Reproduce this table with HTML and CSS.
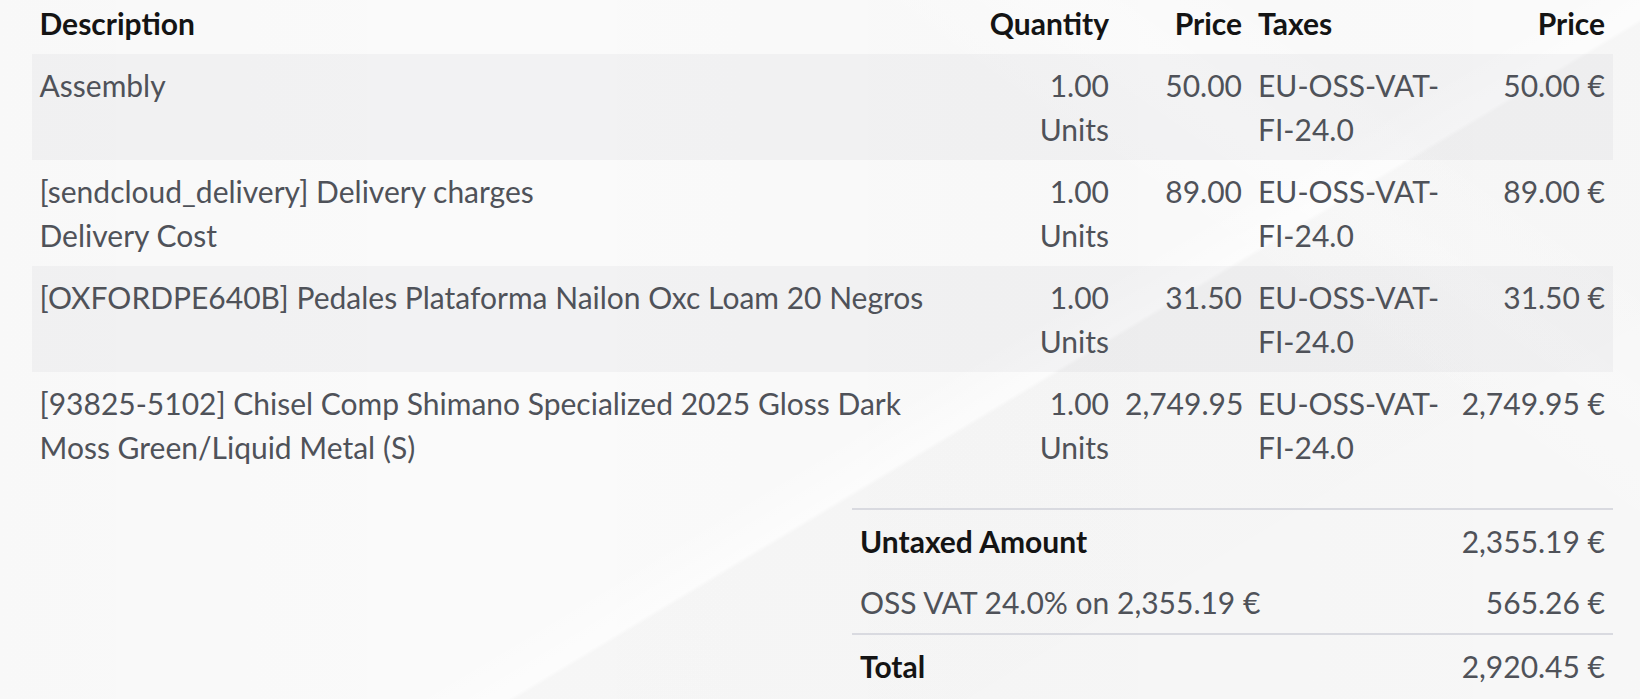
FILE: index.html
```html
<!DOCTYPE html>
<html lang="en">
<head>
<meta charset="utf-8">
<title>Order lines</title>
<link rel="stylesheet" href="styles.css">
</head>
<body>
<div class="page">
  <table class="lines">
    <colgroup>
      <col class="c-desc">
      <col class="c-qty">
      <col class="c-price">
      <col class="c-tax">
      <col class="c-total">
    </colgroup>
    <thead>
      <tr>
        <th class="left">Description</th>
        <th class="right">Quantity</th>
        <th class="right">Price</th>
        <th class="left">Taxes</th>
        <th class="right">Price</th>
      </tr>
    </thead>
    <tbody>
      <tr class="odd">
        <td>Assembly</td>
        <td class="right">1.00 Units</td>
        <td class="right">50.00</td>
        <td>EU-OSS-VAT-FI-24.0</td>
        <td class="right">50.00&nbsp;€</td>
      </tr>
      <tr>
        <td>[sendcloud_delivery] Delivery charges<br>Delivery Cost</td>
        <td class="right">1.00 Units</td>
        <td class="right">89.00</td>
        <td>EU-OSS-VAT-FI-24.0</td>
        <td class="right">89.00&nbsp;€</td>
      </tr>
      <tr class="odd">
        <td>[OXFORDPE640B] Pedales Plataforma Nailon Oxc Loam 20 Negros</td>
        <td class="right">1.00 Units</td>
        <td class="right">31.50</td>
        <td>EU-OSS-VAT-FI-24.0</td>
        <td class="right">31.50&nbsp;€</td>
      </tr>
      <tr>
        <td>[93825-5102] Chisel Comp Shimano Specialized 2025 Gloss Dark Moss Green/Liquid Metal (S)</td>
        <td class="right">1.00 Units</td>
        <td class="right">2,749.95</td>
        <td>EU-OSS-VAT-FI-24.0</td>
        <td class="right">2,749.95&nbsp;€</td>
      </tr>
    </tbody>
  </table>

  <div class="totals-wrap">
    <table class="totals">
      <tr class="sep">
        <td class="strong">Untaxed Amount</td>
        <td class="right">2,355.19&nbsp;€</td>
      </tr>
      <tr>
        <td>OSS VAT 24.0% on 2,355.19&nbsp;€</td>
        <td class="right">565.26&nbsp;€</td>
      </tr>
      <tr class="sep">
        <td class="strong">Total</td>
        <td class="right">2,920.45&nbsp;€</td>
      </tr>
    </table>
  </div>
</div>
</body>
</html>
```

FILE: styles.css
```css
html, body {
  margin: 0;
  padding: 0;
  height: 100%;
  overflow: hidden;
}

body {
  font-family: "Lato", "Open Sans", sans-serif;
  font-size: 30px;
  line-height: 44.5px;
  color: #4f5259;
  background-color: #fafafa;
  background-image:
    linear-gradient(149deg, rgba(255,255,255,0) 56%, rgba(255,255,255,0.5) 59.6%, rgba(0,0,0,0.016) 59.9%, rgba(0,0,0,0.012) 100%),
    linear-gradient(35deg, rgba(255,255,255,0) 70%, rgba(255,255,255,0.35) 78%, rgba(255,255,255,0) 86%),
    linear-gradient(90deg, rgba(0,0,0,0.008) 0%, rgba(255,255,255,0) 30%, rgba(0,0,0,0.008) 60%, rgba(255,255,255,0) 100%);
}

.page {
  margin-top: -7.5px;
  padding: 0 27px 0 31.5px;
}

table {
  border-collapse: collapse;
  border-spacing: 0;
  width: 100%;
}

.lines {
  table-layout: fixed;
}

.c-qty { width: 138px; }
.c-price { width: 133px; }
.c-tax { width: 203px; }
.c-total { width: 160px; }

th, td {
  padding: 8.5px 8px;
  vertical-align: top;
  text-align: left;
  font-weight: 400;
}

th {
  font-weight: 700;
  color: #141414;
}

.left { text-align: left; }
.right { text-align: right; }

.lines tbody tr.odd td {
  background-color: rgba(0, 0, 20, 0.033);
}

.totals-wrap {
  display: flex;
  justify-content: flex-end;
  margin-top: 30px;
}

.totals {
  width: 761px;
}

.totals tr.sep td {
  border-top: 2px solid #d9dae0;
}

.totals td.strong {
  font-weight: 700;
  color: #141414;
}
```
